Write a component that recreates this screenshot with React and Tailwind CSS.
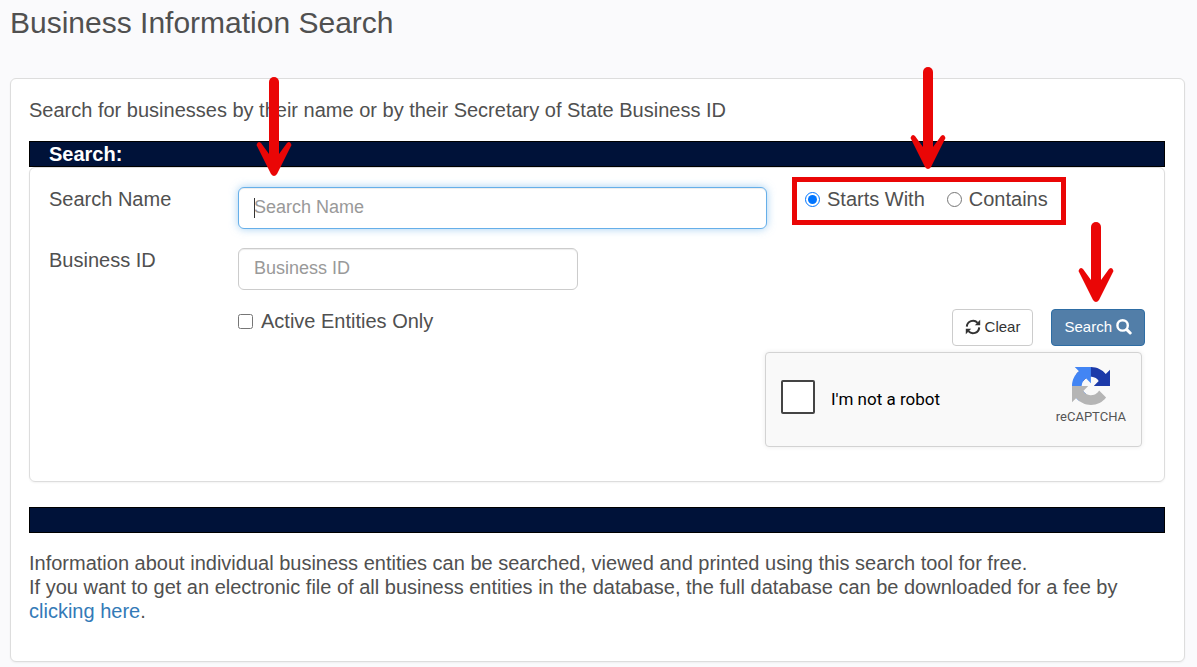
import { useState } from "react";

function Arrow({ shaft, className }) {
  const tip = shaft + 22;
  const wing = tip - 34;

  return (
    <svg
      width="36"
      height={tip}
      viewBox={`0 0 36 ${tip}`}
      className={className}
      aria-hidden="true"
    >
      <path d={`M18 5V${tip - 16}`} stroke="#ea0606" strokeWidth="10" strokeLinecap="round" />
      <path
        d={`M5 ${wing + 1}L13 ${wing + 12}H23L31 ${wing + 1}Q34 ${wing - 2} 35.5 ${wing + 3}L21 ${tip - 2}Q18 ${tip + 2} 15 ${tip - 2}L0.5 ${wing + 3}Q2 ${wing - 2} 5 ${wing + 1}Z`}
        fill="#ea0606"
      />
    </svg>
  );
}

function RefreshIcon() {
  return (
    <svg width="16" height="16" viewBox="0 0 16 16" aria-hidden="true">
      <path
        d="M1.8 7.6A6.2 6.2 0 0 1 12.6 3.8M14.2 8.4A6.2 6.2 0 0 1 3.4 12.2"
        fill="none"
        stroke="currentColor"
        strokeWidth="2"
      />
      <path d="M15.2 0.8V6.2H9.8ZM0.8 15.2V9.8H6.2Z" fill="currentColor" />
    </svg>
  );
}

function SearchIcon() {
  return (
    <svg width="16" height="16" viewBox="0 0 16 16" aria-hidden="true">
      <circle cx="6.6" cy="6.4" r="5.2" fill="none" stroke="currentColor" strokeWidth="2.4" />
      <path d="M10.8 10.6L14.2 14" stroke="currentColor" strokeWidth="3" strokeLinecap="round" />
    </svg>
  );
}

function RecaptchaLogo() {
  return (
    <svg width="38" height="38" viewBox="0 0 64 64" aria-hidden="true">
      <path
        fill="#1c3aa9"
        d="M64 31.955l-.033-1.37V4.687l-7.16 7.16C50.948 4.674 42.033.093 32.05.093c-10.4 0-19.622 4.96-25.458 12.64l11.736 11.86a15.55 15.55 0 0 1 4.754-5.334c2.05-1.6 4.952-2.906 8.968-2.906.485 0 .86.057 1.135.163 4.976.393 9.288 3.14 11.828 7.124l-8.307 8.307L64 31.953"
      />
      <path
        fill="#4285f4"
        d="M31.862.094l-1.37.033H4.594l7.16 7.16C4.58 13.147 0 22.06 0 32.046c0 10.4 4.96 19.622 12.64 25.458L24.5 45.768a15.55 15.55 0 0 1-5.334-4.754c-1.6-2.05-2.906-4.952-2.906-8.968 0-.485.057-.86.163-1.135.393-4.976 3.14-9.288 7.124-11.828l8.307 8.307L31.86.095"
      />
      <path
        fill="#b5b5b5"
        d="M.001 32.045l.033 1.37v25.898l7.16-7.16c5.86 7.173 14.774 11.754 24.76 11.754 10.4 0 19.622-4.96 25.458-12.64l-11.736-11.86a15.55 15.55 0 0 1-4.754 5.334c-2.05 1.6-4.952 2.906-8.968 2.906-.485 0-.86-.057-1.135-.163-4.976-.393-9.288-3.14-11.828-7.124l8.307-8.307c-10.522.04-22.4.066-27.295-.005"
      />
    </svg>
  );
}

export default function App() {
  const [name, setName] = useState("");
  const [businessId, setBusinessId] = useState("");
  const [match, setMatch] = useState("starts");

  const clear = () => {
    setName("");
    setBusinessId("");
    setMatch("starts");
  };

  return (
    <div className="min-h-screen bg-[#fafafc] pr-3 pb-1 pl-[10px] font-['Liberation_Sans',Arial,sans-serif] text-[20px] leading-6 text-[#505050]">
      <h1 className="pt-[5px] pb-[37px] text-[30px] leading-9">Business Information Search</h1>

      <main className="rounded-md border border-[#dddddd] bg-white pt-[19px] pr-[19px] pb-[38px] pl-[18px] shadow-xs">
        <p className="mb-[19px]">
          Search for businesses by their name or by their Secretary of State Business ID
        </p>

        <h2 className="border border-black bg-[#001239] px-[19px] font-bold text-white">
          Search:
        </h2>

        <form
          className="mb-[25px] flex flex-col gap-[19px] rounded-md border border-[#dddddd] pt-[19px] pb-[34px] shadow-xs"
          onSubmit={(e) => e.preventDefault()}
        >
          <div className="grid grid-cols-12">
            <label htmlFor="name" className="col-span-2 pl-[19px]">
              Search Name
            </label>
            <div className="col-span-6 px-[19px]">
              <div className="relative">
                <input
                  id="name"
                  type="text"
                  placeholder="Search Name"
                  value={name}
                  onChange={(e) => setName(e.target.value)}
                  className="block h-[42px] w-full rounded-md border border-[#66afe9] bg-white px-[15px] pb-0.5 text-[18px] text-[#555555] caret-transparent shadow-[inset_0_1px_1px_rgba(0,0,0,0.075),0_0_8px_rgba(102,175,233,0.6)] outline-none placeholder:text-[#999999]"
                />
                <span className="absolute top-[11px] left-4 h-5 w-px bg-[#333333]" />
                <Arrow
                  shaft={77}
                  className="pointer-events-none absolute bottom-full left-[18px] mb-[11px]"
                />
              </div>
            </div>
            <div className="col-span-4 pl-[19px]">
              <div className="relative inline-flex gap-[22px]">
                <label className="flex items-center gap-[7px]">
                  <input
                    type="radio"
                    name="match"
                    checked={match === "starts"}
                    onChange={() => setMatch("starts")}
                    className="size-[15px]"
                  />
                  Starts With
                </label>
                <label className="flex items-center gap-[7px]">
                  <input
                    type="radio"
                    name="match"
                    checked={match === "contains"}
                    onChange={() => setMatch("contains")}
                    className="size-[15px]"
                  />
                  Contains
                </label>
                <span className="pointer-events-none absolute -top-[10px] -right-[18px] -bottom-[14px] -left-[13px] border-5 border-[#ea0606]" />
                <Arrow
                  shaft={80}
                  className="pointer-events-none absolute bottom-full left-[105px] mb-[18px]"
                />
              </div>
            </div>
          </div>

          <div className="grid grid-cols-12">
            <label htmlFor="business-id" className="col-span-2 pl-[19px]">
              Business ID
            </label>
            <div className="col-span-4 px-[19px]">
              <input
                id="business-id"
                type="text"
                placeholder="Business ID"
                value={businessId}
                onChange={(e) => setBusinessId(e.target.value)}
                className="block h-[42px] w-full rounded-md border border-[#cccccc] bg-white px-[15px] pb-0.5 text-[18px] text-[#555555] shadow-[inset_0_1px_1px_rgba(0,0,0,0.075)] outline-none placeholder:text-[#999999]"
              />
            </div>
          </div>

          <div className="grid grid-cols-12">
            <div className="col-span-5 col-start-3 pl-[19px]">
              <label className="flex items-center gap-2">
                <input type="checkbox" className="size-[15px]" />
                Active Entities Only
              </label>
            </div>
            <div className="col-span-5 flex flex-col items-end gap-[6px] pr-[19px]">
              <div className="flex gap-[18px] text-[15px]">
                <button
                  type="button"
                  onClick={clear}
                  className="flex h-[37px] items-center gap-1 rounded-sm border border-[#cccccc] bg-white px-3 pb-0.5 text-[#333333]"
                >
                  <RefreshIcon />
                  Clear
                </button>
                <div className="relative">
                  <button
                    type="submit"
                    className="flex h-[37px] items-center gap-1 rounded-sm border border-[#2e6da4] bg-[#527ea8] px-3 pb-0.5 text-white"
                  >
                    Search
                    <SearchIcon />
                  </button>
                  <Arrow
                    shaft={58}
                    className="pointer-events-none absolute bottom-full left-[27px] mb-[7px]"
                  />
                </div>
              </div>

              <div className="mr-[3px] flex h-[95px] w-[377px] justify-between rounded-sm border border-[#d3d3d3] bg-[#f9f9f9] px-[15px] font-[Roboto,sans-serif] shadow-[0_0_5px_rgba(0,0,0,0.08)]">
                <label className="flex items-center gap-4 pb-0.5 text-[17px] text-black">
                  <input
                    type="checkbox"
                    className="mb-1 size-[34px] appearance-none rounded-xs border-2 border-[#444444] bg-white"
                  />
                  I'm not a robot
                </label>
                <div className="flex flex-col items-center pt-[14px] text-[13px] text-[#555555]">
                  <RecaptchaLogo />
                  reCAPTCHA
                </div>
              </div>
            </div>
          </div>
        </form>

        <div className="mb-[18px] h-[26px] border border-black bg-[#001239]" />

        <p>
          Information about individual business entities can be searched, viewed and printed using
          this search tool for free.
          <br />
          If you want to get an electronic file of all business entities in the database, the full
          database can be downloaded for a fee by{" "}
          <a href="#download" className="text-[#337ab7]">
            clicking here
          </a>
          .
        </p>
      </main>
    </div>
  );
}
